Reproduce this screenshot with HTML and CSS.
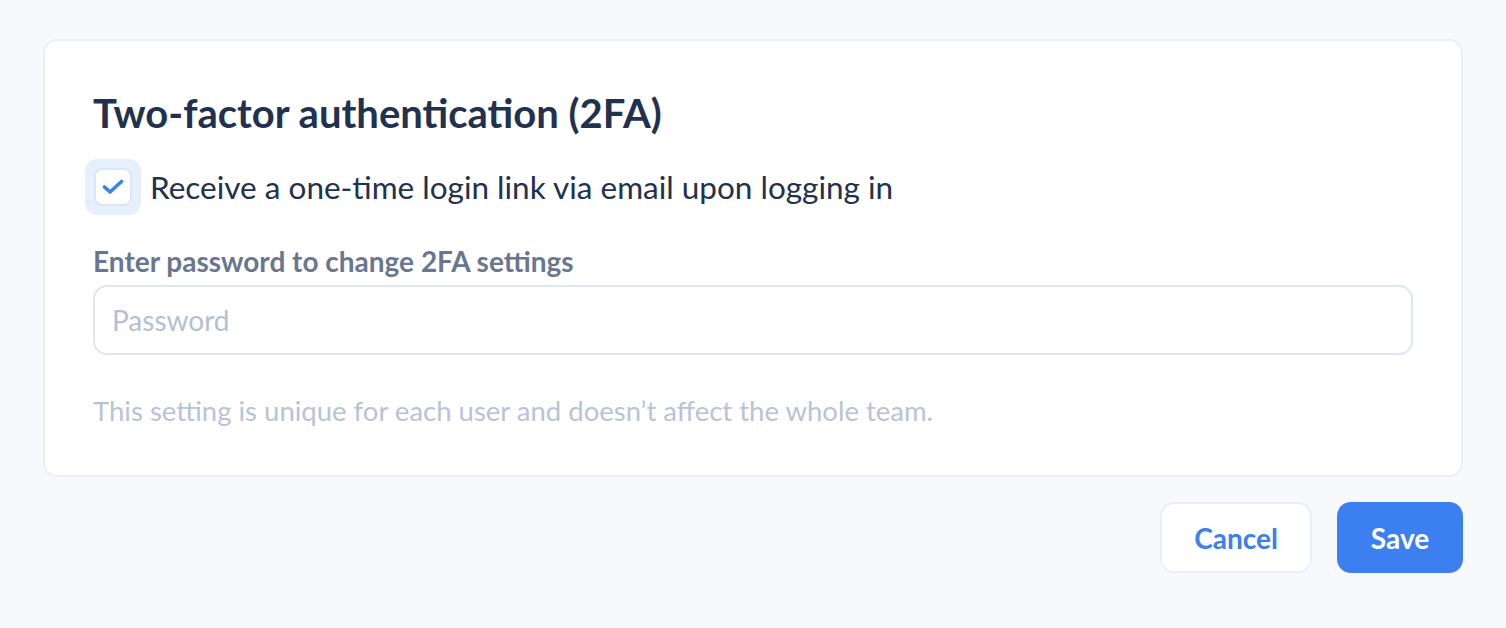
FILE: index.html
```html
<!DOCTYPE html>
<html>
<head>
<meta charset="utf-8">
<link rel="stylesheet" href="styles.css">
</head>
<body>
<div class="page">
  <section class="card">
    <h1 class="title">Two-factor authentication (2FA)</h1>
    <label class="check-row">
      <span class="check-ring">
        <span class="check-box">
          <svg width="22" height="16" viewBox="0 0 22 16"><path d="M2.5 8 L8 13 L19.5 2.5" fill="none" stroke="#3b7ff0" stroke-width="3.6" stroke-linecap="round" stroke-linejoin="round"/></svg>
        </span>
      </span>
      <span class="check-text">Receive a one-time login link via email upon logging in</span>
    </label>
    <div class="field-label">Enter password to change 2FA settings</div>
    <div class="input"><span class="placeholder">Password</span></div>
    <p class="hint">This setting is unique for each user and doesn’t affect the whole team.</p>
  </section>
  <div class="actions">
    <button class="btn btn-secondary">Cancel</button>
    <button class="btn btn-primary">Save</button>
  </div>
</div>
</body>
</html>
```
FILE: styles.css
```css
html, body {
  margin: 0;
  padding: 0;
  background: #f7f9fc;
  font-family: Lato, "Noto Sans", sans-serif;
}
.page {
  padding: 39px 43px 0 43px;
}
.card {
  background: #ffffff;
  border: 2px solid #e9eff8;
  border-radius: 14px;
  padding: 48px 48px 48px 48px;
}
.title {
  margin: 0;
  font-size: 40px;
  font-weight: 700;
  color: #22314e;
  line-height: 48px;
}
.check-row {
  display: flex;
  align-items: center;
  gap: 9px;
  margin-top: 22px;
  margin-left: -8px;
}
.check-ring {
  width: 56px;
  height: 56px;
  border-radius: 12px;
  background: #e6f0fd;
  display: flex;
  align-items: center;
  justify-content: center;
}
.check-box {
  width: 34px;
  height: 34px;
  border: 2px solid #dbe5f3;
  border-radius: 8px;
  background: #ffffff;
  display: flex;
  align-items: center;
  justify-content: center;
}
.check-text {
  font-size: 31.5px;
  line-height: 40px;
  color: #22314e;
}
.field-label {
  margin-top: 30px;
  font-size: 28px;
  font-weight: 700;
  color: #68778f;
  line-height: 32px;
}
.input {
  margin-top: 8px;
  height: 66px;
  border: 2px solid #dde6f3;
  border-radius: 14px;
  display: flex;
  align-items: center;
  padding: 0 17px;
}
.placeholder {
  font-size: 28px;
  color: #b2c0d6;
}
.hint {
  margin: 40px 0 0 0;
  font-size: 27.5px;
  line-height: 32px;
  color: #b7c3d8;
}
.actions {
  display: flex;
  justify-content: flex-end;
  gap: 25px;
  margin-top: 25px;
}
.btn {
  font-family: Lato, "Noto Sans", sans-serif;
  font-size: 28px;
  font-weight: 700;
  height: 71px;
  border-radius: 14px;
  cursor: pointer;
}
.btn-secondary {
  width: 152px;
  background: #ffffff;
  border: 2px solid #e9eff8;
  color: #3b7ff0;
}
.btn-primary {
  width: 126px;
  background: #3b7ff0;
  border: none;
  color: #ffffff;
}
```
